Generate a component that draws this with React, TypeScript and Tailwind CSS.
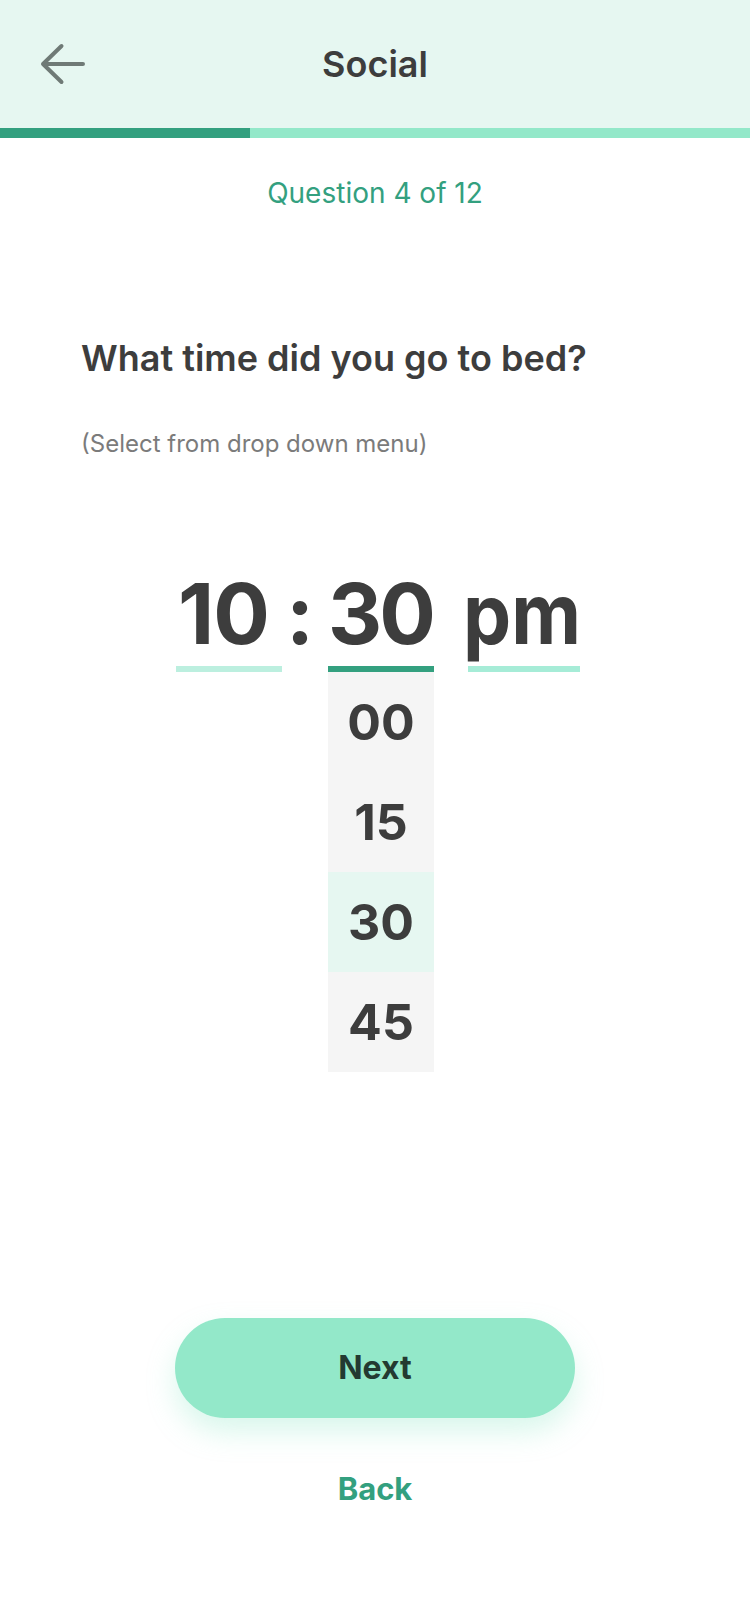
import { useState } from "react";

const minutes = ["00", "15", "30", "45"];

function BackArrow() {
  return (
    <svg width="46" height="42" viewBox="0 0 46 42" fill="none">
      <path
        d="M3 21H43M21.5 3L3 21L21.5 39"
        stroke="#6f7a76"
        strokeWidth="4"
        strokeLinecap="round"
        strokeLinejoin="round"
      />
    </svg>
  );
}

export default function App() {
  const [minute, setMinute] = useState("30");

  return (
    <div className="min-h-[1624px] bg-white font-['Inter','Noto_Sans',sans-serif] text-[#3d3d3d]">
      {/* header */}
      <div className="grid h-[128px] grid-cols-[1fr_auto_1fr] items-center bg-[#e6f7f1]">
        <button className="ml-[40px] flex w-fit items-center">
          <BackArrow />
        </button>
        <h1 className="text-[36px] font-semibold leading-none">Social</h1>
        <div />
      </div>
      <div className="flex h-[10px]">
        <div className="w-[250px] bg-[#33a07f]" />
        <div className="flex-1 bg-[#93e8c9]" />
      </div>

      <p className="mt-[41px] text-center text-[28px] leading-none text-[#33a07f]">Question 4 of 12</p>

      <div className="pl-[81px]">
        <h2 className="mt-[133px] text-[36px] font-semibold leading-none">What time did you go to bed?</h2>
        <p className="mt-[56px] text-[24px] leading-none text-[#7b7b7b]">(Select from drop down menu)</p>
      </div>

      {/* time picker */}
      <div className="mt-[116px] grid grid-cols-[106px_46px_106px_34px_112px] pl-[176px] font-bold">
        <div className="pr-[11px] text-center text-[84px] leading-none tracking-[-1px]">10</div>
        <div className="pr-[10px] text-center text-[84px] leading-none">:</div>
        <div className="pr-[2px] text-center text-[84px] leading-none tracking-[-3px]">{minute}</div>
        <div />
        <div className="text-[84px] leading-none">
          <span className="-ml-[5px] inline-block origin-left scale-x-[0.91]">pm</span>
        </div>

        <div className="mt-[10px] h-[6px] bg-[#bcefdf]" />
        <div />
        <div className="mt-[10px] h-[6px] bg-[#33a07f]" />
        <div />
        <div className="mt-[10px] h-[6px] bg-[#a6ecd7]" />

        <div />
        <div />
        <ul className="bg-[#f5f5f5]">
          {minutes.map((m) => (
            <li
              key={m}
              onClick={() => setMinute(m)}
              className={`flex h-[100px] items-center justify-center text-[50px] leading-none ${
                m === minute ? "bg-[#e6f7f1]" : ""
              }`}
            >
              {m}
            </li>
          ))}
        </ul>
      </div>

      {/* actions */}
      <div className="flex flex-col items-center">
        <button className="mt-[246px] flex h-[100px] w-[400px] items-center justify-center rounded-full bg-[#93e8c9] text-[32px] font-bold leading-none text-[#233a31] shadow-[0_14px_28px_rgba(147,232,201,0.35)]">
          Next
        </button>
        <button className="mt-[55px] text-[31px] font-bold leading-none text-[#33a07f]">Back</button>
      </div>
    </div>
  );
}
